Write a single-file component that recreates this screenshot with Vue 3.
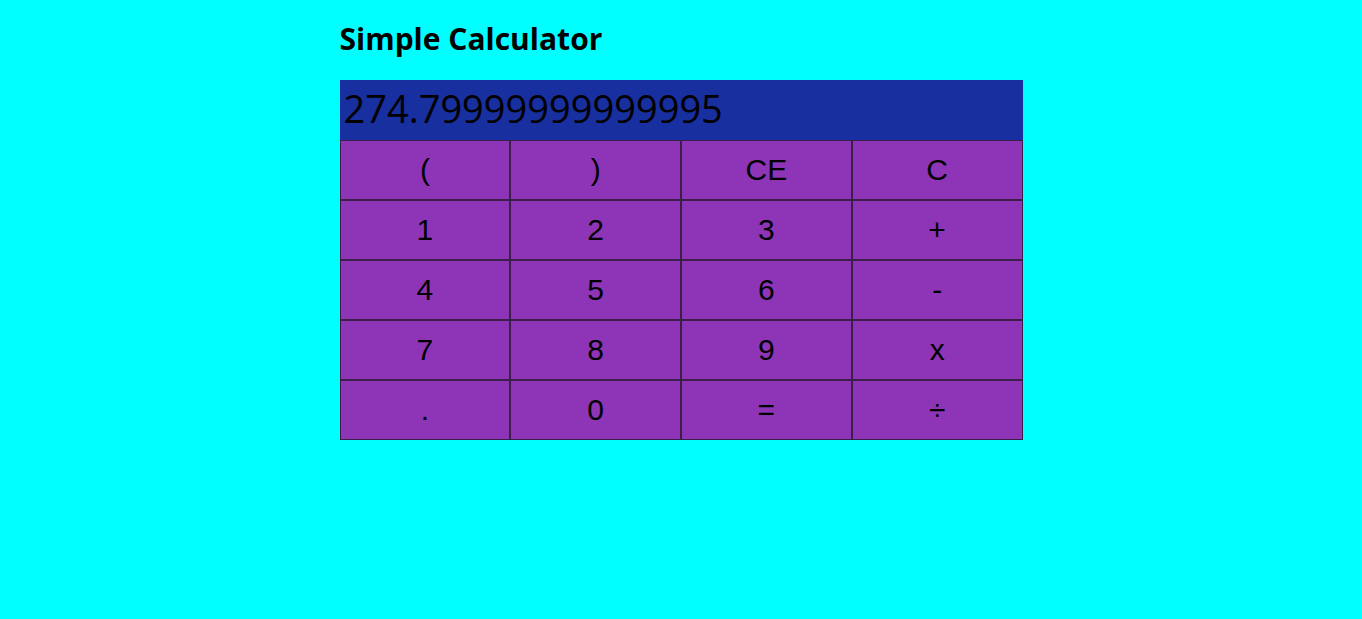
<script setup>
import { ref } from 'vue'

const display = ref('274.79999999999995')

const keys = [
  '(', ')', 'CE', 'C',
  '1', '2', '3', '+',
  '4', '5', '6', '-',
  '7', '8', '9', 'x',
  '.', '0', '=', '÷'
]

function evaluate(text) {
  const tokens = text.match(/\d*\.?\d+|[-+x÷()]/g) || []
  let i = 0
  const factor = () => {
    const t = tokens[i++]
    if (t === '-') return -factor()
    if (t === '(') {
      const v = sum()
      i++
      return v
    }
    return Number(t)
  }
  const product = () => {
    let v = factor()
    while (tokens[i] === 'x' || tokens[i] === '÷') {
      v = tokens[i++] === 'x' ? v * factor() : v / factor()
    }
    return v
  }
  const sum = () => {
    let v = product()
    while (tokens[i] === '+' || tokens[i] === '-') {
      v = tokens[i++] === '+' ? v + product() : v - product()
    }
    return v
  }
  const result = sum()
  return Number.isNaN(result) ? 'error' : String(result)
}

function press(key) {
  if (key === 'C') display.value = ''
  else if (key === 'CE') display.value = display.value.slice(0, -1)
  else if (key === '=') display.value = evaluate(display.value)
  else display.value += key
}
</script>

<template>
  <main class="calculator">
    <h1>Simple Calculator</h1>
    <output class="result" aria-label="Result">{{ display }}</output>
    <div class="keys">
      <button v-for="key in keys" :key="key" type="button" @click="press(key)">{{ key }}</button>
    </div>
  </main>
</template>

<style>
body {
  margin: 0;
  background: #00ffff;
}
</style>

<style scoped>
.calculator {
  width: calc(50% + 2px);
  margin: 0 auto;
  padding-top: 16px;
  color: #000;
  font-family: "Segoe UI", "Open Sans", "Noto Sans", sans-serif;
}

h1 {
  margin: 0 0 18px;
  font-size: 30px;
  line-height: 46px;
  font-weight: 700;
}

.result {
  display: block;
  box-sizing: border-box;
  min-height: 60px;
  padding: 0 4px;
  background: #172f9f;
  font-size: 38px;
  line-height: 56px;
  overflow: hidden;
}

.keys {
  display: grid;
  grid-template-columns: repeat(4, 1fr);
}

button {
  height: 60px;
  margin: 0;
  padding: 0;
  border: 1px solid #3b1f4a;
  border-radius: 0;
  background: #8e35b7;
  color: #000;
  font-family: "Liberation Sans", Arial, sans-serif;
  font-size: 30px;
  cursor: pointer;
}
</style>
